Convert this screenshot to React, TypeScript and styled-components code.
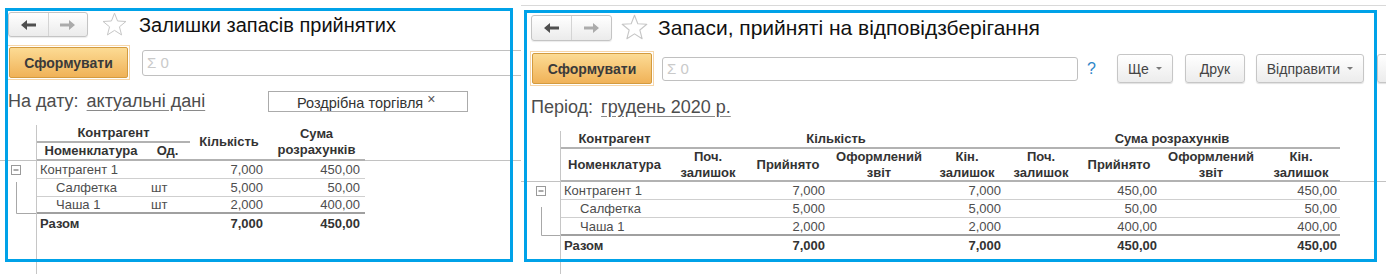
import React from 'react';
import styled, { createGlobalStyle } from 'styled-components';

const GlobalStyle = createGlobalStyle`
  html, body {
    margin: 0;
    padding: 0;
    background: #fff;
  }
  body {
    font-family: "Liberation Sans", Arial, sans-serif;
    color: #333;
  }
  * {
    box-sizing: border-box;
  }
`;

type Align = 'left' | 'center' | 'right';
type Rule = 'none' | 'row' | 'total';

const Page = styled.div`
  display: flex;
  width: 1386px;
  height: 274px;
  overflow: hidden;
  background: #fff;
`;

const Shot = styled.section<{ $width: number }>`
  position: relative;
  flex: none;
  width: ${({ $width }) => $width}px;
  height: 274px;
  overflow: hidden;
`;

const WindowEdge = styled.div`
  margin-top: 5px;
  border-top: 1px solid #d9d9d9;
`;

const Frame = styled.div<{ $left: number; $top: number; $width: number; $height: number }>`
  position: absolute;
  left: ${({ $left }) => $left}px;
  top: ${({ $top }) => $top}px;
  width: ${({ $width }) => $width}px;
  height: ${({ $height }) => $height}px;
  border: 3px solid #00a2e8;
  pointer-events: none;
`;

const TitleBar = styled.div<{ $top: number; $indent: number }>`
  display: flex;
  align-items: center;
  margin-top: ${({ $top }) => $top}px;
  padding-left: ${({ $indent }) => $indent}px;
`;

const NavGroup = styled.div<{ $w: number; $h: number }>`
  display: flex;
  width: ${({ $w }) => $w}px;
  height: ${({ $h }) => $h}px;
  border: 1px solid #c4c4c4;
  border-radius: 3px;
  background: linear-gradient(#ffffff, #ebebeb);
  box-shadow: 0 1px 1px rgba(0, 0, 0, 0.08);
`;

const NavButton = styled.div`
  flex: 1;
  display: flex;
  align-items: center;
  justify-content: center;

  & + & {
    border-left: 1px solid #d4d4d4;
  }
`;

const StarBox = styled.div<{ $gap: number }>`
  display: flex;
  margin-left: ${({ $gap }) => $gap}px;
`;

const Title = styled.h1<{ $size: number; $gap: number }>`
  margin: 0 0 0 ${({ $gap }) => $gap}px;
  font-size: ${({ $size }) => $size}px;
  font-weight: normal;
  line-height: 24px;
  color: #111;
  white-space: nowrap;
`;

const Toolbar = styled.div<{ $top: number }>`
  display: flex;
  align-items: center;
  margin-top: ${({ $top }) => $top}px;
`;

const FocusRing = styled.div<{ $left: number }>`
  margin-left: ${({ $left }) => $left}px;
  padding: 1px;
  border: 1px solid #f7d6a8;
`;

const FormButton = styled.button<{ $w: number; $h: number }>`
  display: flex;
  align-items: center;
  justify-content: center;
  width: ${({ $w }) => $w}px;
  height: ${({ $h }) => $h}px;
  padding: 0;
  border: 1px solid #d39b40;
  border-radius: 2px;
  background: linear-gradient(#fcdb94, #f0b258);
  font-family: inherit;
  font-size: 14px;
  font-weight: bold;
  color: #3a3a3a;
`;

const Search = styled.div<{ $left: number; $w: number; $h: number }>`
  display: flex;
  align-items: center;
  flex: none;
  margin-left: ${({ $left }) => $left}px;
  width: ${({ $w }) => $w}px;
  height: ${({ $h }) => $h}px;
  padding-left: 4px;
  border: 1px solid #c0c0c0;
  border-radius: 3px;
  font-size: 15px;
  color: #cacaca;
`;

const Help = styled.span`
  margin-left: 9px;
  font-size: 16px;
  color: #2f86c9;
`;

const ActionButton = styled.div<{ $w: number; $left: number }>`
  display: flex;
  align-items: center;
  justify-content: center;
  gap: 7px;
  flex: none;
  width: ${({ $w }) => $w}px;
  height: 29px;
  margin-left: ${({ $left }) => $left}px;
  border: 1px solid #c6c6c6;
  border-radius: 3px;
  background: linear-gradient(#ffffff, #ececec);
  box-shadow: 0 1px 1px rgba(0, 0, 0, 0.12);
  font-size: 14px;
  color: #444;
`;

const Caret = styled.span`
  width: 0;
  height: 0;
  border-left: 3px solid transparent;
  border-right: 3px solid transparent;
  border-top: 3px solid #7a7a7a;
`;

const ParamRow = styled.div<{ $top: number; $indent: number }>`
  display: flex;
  align-items: center;
  height: 21px;
  margin-top: ${({ $top }) => $top}px;
  padding-left: ${({ $indent }) => $indent}px;
  font-size: 18px;
  color: #4d4d4d;
`;

const ParamGroup = styled.div<{ $w?: number }>`
  display: flex;
  align-items: center;
  width: ${({ $w }) => ($w ? `${$w}px` : 'auto')};
`;

const ParamLink = styled.span`
  margin-left: 8px;
  text-decoration: underline;
  text-decoration-color: #8a8a8a;
  text-underline-offset: 3px;
`;

const FilterBox = styled.div`
  display: flex;
  align-items: flex-start;
  width: 200px;
  height: 21px;
  padding: 3px 0 0 28px;
  border: 1px solid #ababab;
  font-size: 14.5px;
  color: #333;
`;

const Remove = styled.span`
  margin: -4px 0 0 4px;
  font-size: 14px;
  color: #555;
`;

const Grid = styled.div<{ $cols: string; $rows: string; $top: number }>`
  display: grid;
  grid-template-columns: ${({ $cols }) => $cols};
  grid-template-rows: ${({ $rows }) => $rows};
  margin-top: ${({ $top }) => $top}px;
`;

const Gutter = styled.div<{ $row: string; $head?: boolean }>`
  grid-column: 1;
  grid-row: ${({ $row }) => $row};
  border-right: 1px solid #c6c6c6;
  border-bottom: ${({ $head }) => ($head ? '1px solid #c2c2c2' : 'none')};
`;

const HeadFill = styled.div<{ $row: string }>`
  grid-column: -2 / -1;
  grid-row: ${({ $row }) => $row};
  border-bottom: 1px solid #c2c2c2;
`;

const HeadCell = styled.div<{ $col: string; $row: string; $rule?: boolean }>`
  display: flex;
  align-items: center;
  justify-content: center;
  grid-column: ${({ $col }) => $col};
  grid-row: ${({ $row }) => $row};
  border-bottom: ${({ $rule }) => ($rule ? '2px solid #b2b2b2' : 'none')};
  font-size: 13px;
  font-weight: bold;
  line-height: 16px;
  text-align: center;
  color: #333;
  white-space: pre-line;
`;

const Cell = styled.div<{
  $col: number;
  $row: number;
  $align: Align;
  $pad: number;
  $rule: Rule;
  $bold?: boolean;
}>`
  display: flex;
  align-items: center;
  justify-content: ${({ $align }) =>
    $align === 'right' ? 'flex-end' : $align === 'center' ? 'center' : 'flex-start'};
  grid-column: ${({ $col }) => $col};
  grid-row: ${({ $row }) => $row};
  padding: ${({ $align, $pad }) => ($align === 'right' ? `0 ${$pad}px 0 0` : `0 0 0 ${$pad}px`)};
  border-bottom: ${({ $rule }) =>
    $rule === 'total' ? '2px solid #a0a0a0' : $rule === 'row' ? '1px solid #cfcfcf' : 'none'};
  font-size: 13px;
  font-weight: ${({ $bold }) => ($bold ? 'bold' : 'normal')};
  color: ${({ $bold }) => ($bold ? '#333' : '#4d4d4d')};
  white-space: nowrap;
`;

const ArrowIcon = ({ dir, color }: { dir: 'back' | 'forward'; color: string }) => (
  <svg width="15" height="10" viewBox="0 0 15 10">
    <polygon
      points="0,5 6,0 6,3.5 15,3.5 15,6.5 6,6.5 6,10"
      fill={color}
      transform={dir === 'forward' ? 'translate(15,0) scale(-1,1)' : undefined}
    />
  </svg>
);

const StarIcon = ({ size }: { size: number }) => (
  <svg width={size} height={size} viewBox="0 0 25 25">
    <polygon
      points="12.5,1.2 15.56,8.99 23.91,9.49 17.45,14.81 19.55,22.91 12.5,18.4 5.45,22.91 7.55,14.81 1.09,9.49 9.44,8.99"
      fill="#fff"
      stroke="#c6c6c6"
      strokeWidth="1"
      strokeLinejoin="round"
    />
  </svg>
);

const TreeIcon = ({ w, h, box, stem }: { w: number; h: number; box: number; stem: number }) => (
  <svg width={w} height={h} viewBox={`0 0 ${w} ${h}`}>
    <line x1={stem} y1={box + 9} x2={stem} y2={h - 0.5} stroke="#a8a8a8" />
    <line x1={stem} y1={h - 0.5} x2={w} y2={h - 0.5} stroke="#a8a8a8" />
    <rect x={box - 0.5} y={4.5} width={9} height={9} fill="#fff" stroke="#9a9a9a" />
    <line x1={box + 1.5} y1={9} x2={box + 6.5} y2={9} stroke="#555" />
  </svg>
);

const Nav = ({ w, h }: { w: number; h: number }) => (
  <NavGroup $w={w} $h={h}>
    <NavButton>
      <ArrowIcon dir="back" color="#4f4f4f" />
    </NavButton>
    <NavButton>
      <ArrowIcon dir="forward" color="#ababab" />
    </NavButton>
  </NavGroup>
);

const leftRows = [
  { name: 'Контрагент 1', unit: '', qty: '7,000', sum: '450,00', level: 0 },
  { name: 'Салфетка', unit: 'шт', qty: '5,000', sum: '50,00', level: 1 },
  { name: 'Чаша 1', unit: 'шт', qty: '2,000', sum: '400,00', level: 1 },
];

const rightRows = [
  { name: 'Контрагент 1', level: 0, values: ['', '7,000', '', '7,000', '', '450,00', '', '450,00'] },
  { name: 'Салфетка', level: 1, values: ['', '5,000', '', '5,000', '', '50,00', '', '50,00'] },
  { name: 'Чаша 1', level: 1, values: ['', '2,000', '', '2,000', '', '400,00', '', '400,00'] },
];

const rightTotal = ['', '7,000', '', '7,000', '', '450,00', '', '450,00'];

const rightSubHeads = [
  'Поч.\nзалишок',
  'Прийнято',
  'Оформлений\nзвіт',
  'Кін.\nзалишок',
  'Поч.\nзалишок',
  'Прийнято',
  'Оформлений\nзвіт',
  'Кін.\nзалишок',
];

const ruleFor = (i: number, count: number): Rule => (i === count - 1 ? 'total' : 'row');

const LeftReport = () => (
  <Shot $width={521}>
    <TitleBar $top={12} $indent={8}>
      <Nav w={80} h={25} />
      <StarBox $gap={14}>
        <StarIcon size={25} />
      </StarBox>
      <Title $size={20} $gap={12}>Залишки запасів прийнятих</Title>
    </TitleBar>

    <Toolbar $top={8}>
      <FocusRing $left={7}>
        <FormButton $w={119} $h={31}>Сформувати</FormButton>
      </FocusRing>
      <Search $left={12} $w={420} $h={26}>Σ 0</Search>
    </Toolbar>

    <ParamRow $top={11} $indent={8}>
      <ParamGroup $w={260}>
        На дату:
        <ParamLink>актуальні дані</ParamLink>
      </ParamGroup>
      <FilterBox>
        Роздрібна торгівля
        <Remove>×</Remove>
      </FilterBox>
    </ParamRow>

    <Grid
      $top={13}
      $cols="37px 108px 45px 78px 97px 1fr"
      $rows="18px 18px 18px 18px 17px 18px 42px"
    >
      <Gutter $row="1 / 3" $head />
      <HeadCell $col="2 / 4" $row="1" $rule>Контрагент</HeadCell>
      <HeadCell $col="4" $row="1 / 3" $rule>Кількість</HeadCell>
      <HeadCell $col="5" $row="1 / 3" $rule>{'Сума\nрозрахунків'}</HeadCell>
      <HeadCell $col="2" $row="2" $rule>Номенклатура</HeadCell>
      <HeadCell $col="3" $row="2" $rule>Од.</HeadCell>
      <HeadFill $row="1 / 3" />

      <Gutter $row="3 / 6">
        <TreeIcon w={36} h={53} box={12} stem={16.5} />
      </Gutter>
      {leftRows.map((r, i) => {
        const rule = ruleFor(i, leftRows.length);
        return (
          <React.Fragment key={r.name}>
            <Cell $col={2} $row={3 + i} $align="left" $pad={r.level ? 19 : 3} $rule={rule}>{r.name}</Cell>
            <Cell $col={3} $row={3 + i} $align="left" $pad={6} $rule={rule}>{r.unit}</Cell>
            <Cell $col={4} $row={3 + i} $align="right" $pad={5} $rule={rule}>{r.qty}</Cell>
            <Cell $col={5} $row={3 + i} $align="right" $pad={5} $rule={rule}>{r.sum}</Cell>
          </React.Fragment>
        );
      })}

      <Gutter $row="6" />
      <Cell $col={2} $row={6} $align="left" $pad={3} $rule="none" $bold>Разом</Cell>
      <Cell $col={4} $row={6} $align="right" $pad={5} $rule="none" $bold>7,000</Cell>
      <Cell $col={5} $row={6} $align="right" $pad={5} $rule="none" $bold>450,00</Cell>
      <Gutter $row="7" />
    </Grid>

    <Frame $left={5} $top={8} $width={508} $height={254} />
  </Shot>
);

const RightReport = () => (
  <Shot $width={865}>
    <WindowEdge>
      <TitleBar $top={8} $indent={10}>
        <Nav w={81} h={26} />
        <StarBox $gap={9}>
          <StarIcon size={27} />
        </StarBox>
        <Title $size={21} $gap={10}>Запаси, прийняті на відповідзберігання</Title>
      </TitleBar>

      <Toolbar $top={10}>
        <FocusRing $left={9}>
          <FormButton $w={120} $h={31}>Сформувати</FormButton>
        </FocusRing>
        <Search $left={8} $w={416} $h={24}>Σ 0</Search>
        <Help>?</Help>
        <ActionButton $w={56} $left={21}>
          Ще
          <Caret />
        </ActionButton>
        <ActionButton $w={60} $left={12}>Друк</ActionButton>
        <ActionButton $w={108} $left={11}>
          Відправити
          <Caret />
        </ActionButton>
        <ActionButton $w={60} $left={13} />
      </Toolbar>

      <ParamRow $top={11} $indent={10}>
        <ParamGroup>
          Період:
          <ParamLink>грудень 2020 р.</ParamLink>
        </ParamGroup>
      </ParamRow>

      <Grid
        $top={13}
        $cols="40px 107px 80px 80px 102px 74px 74px 82px 102px 78px 1fr"
        $rows="18px 33px 18px 18px 18px 18px 30px"
      >
        <Gutter $row="1 / 3" $head />
        <HeadCell $col="2" $row="1" $rule>Контрагент</HeadCell>
        <HeadCell $col="3 / 7" $row="1" $rule>Кількість</HeadCell>
        <HeadCell $col="7 / 11" $row="1" $rule>Сума розрахунків</HeadCell>
        <HeadCell $col="2" $row="2" $rule>Номенклатура</HeadCell>
        {rightSubHeads.map((h, i) => (
          <HeadCell key={i} $col={String(3 + i)} $row="2" $rule>{h}</HeadCell>
        ))}
        <HeadFill $row="1 / 3" />

        <Gutter $row="3 / 6">
          <TreeIcon w={39} h={54} box={16} stem={20.5} />
        </Gutter>
        {rightRows.map((r, i) => {
          const rule = ruleFor(i, rightRows.length);
          return (
            <React.Fragment key={r.name}>
              <Cell $col={2} $row={3 + i} $align="left" $pad={r.level ? 19 : 3} $rule={rule}>{r.name}</Cell>
              {r.values.map((v, j) => (
                <Cell key={j} $col={3 + j} $row={3 + i} $align="right" $pad={3} $rule={rule}>{v}</Cell>
              ))}
            </React.Fragment>
          );
        })}

        <Gutter $row="6" />
        <Cell $col={2} $row={6} $align="left" $pad={3} $rule="none" $bold>Разом</Cell>
        {rightTotal.map((v, j) => (
          <Cell key={j} $col={3 + j} $row={6} $align="right" $pad={3} $rule="none" $bold>{v}</Cell>
        ))}
        <Gutter $row="7" />
      </Grid>
    </WindowEdge>

    <Frame $left={3} $top={10} $width={853} $height={252} />
  </Shot>
);

const App = () => (
  <>
    <GlobalStyle />
    <Page>
      <LeftReport />
      <RightReport />
    </Page>
  </>
);

export default App;
